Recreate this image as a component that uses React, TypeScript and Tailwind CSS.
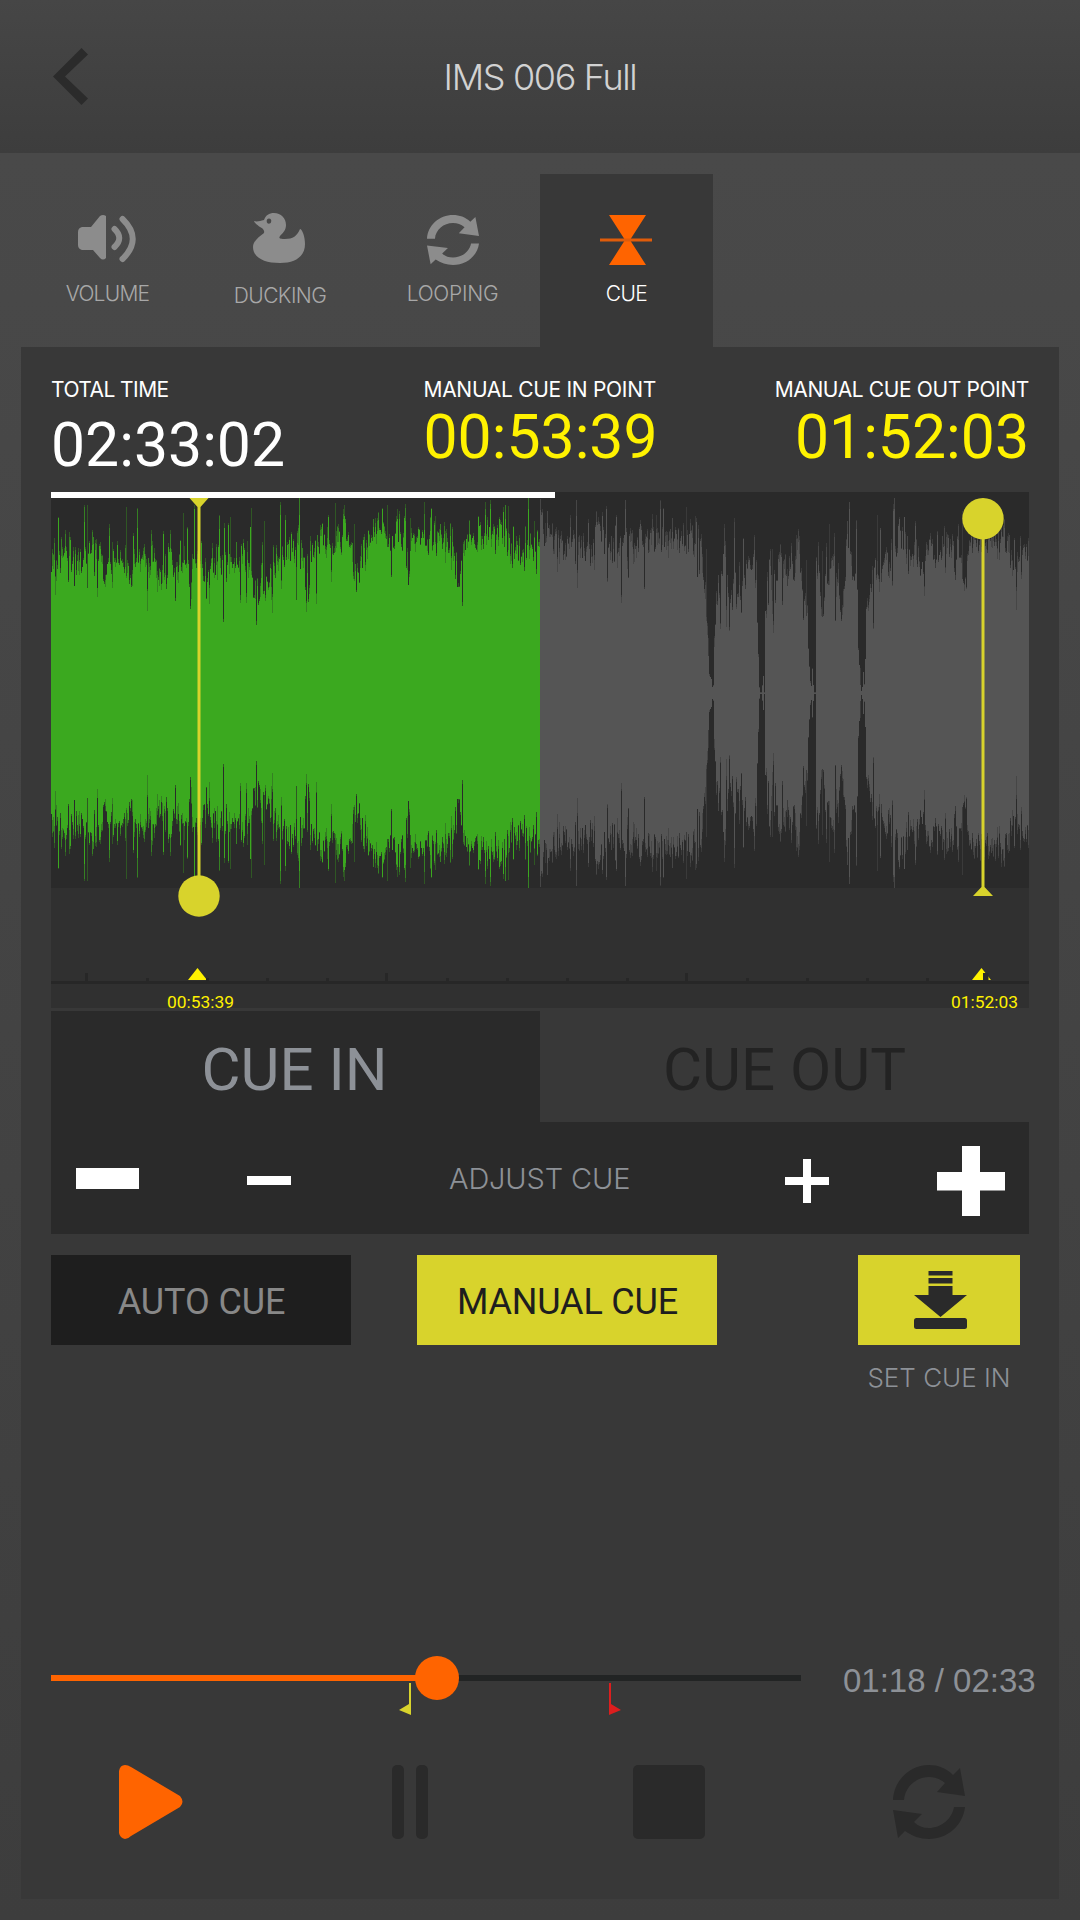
import React from "react";

const LEFT: number[] = [33,265,60,255,80,220,110,255,130,235,160,180,175,210,190,290,215,260,232,200,250,250,270,290,300,230,320,290,335,230,350,290,375,310,385,215,410,240,440,225,465,220,480,250,495,290,510,240,525,280,535,220,550,270,575,260,590,240,605,210,620,240,640,330,670,320,690,280,710,240,730,230,765,190,785,230,800,300,812,200,825,220,845,150,865,210,885,200,910,140,925,160,945,290,960,290,970,190,990,180,1015,150,1030,140,1050,180,1075,140,1090,190,1105,280,1118,170,1130,190,1142,140,1155,210,1170,180,1190,150,1205,190,1225,170,1240,210,1255,310,1268,220,1290,170,1320,165,1350,160,1375,120,1390,180,1410,230,1425,190,1440,230,1470,190,1499,180];
const RIGHT: number[] = [30,190,60,170,80,190,100,200,130,190,165,200,180,160,205,150,225,190,250,210,270,230,290,170,310,220,330,150,350,190,370,170,390,200,420,190,435,160,455,190,480,180,495,200,512,190,518,280,525,375,530,400,535,570,542,590,550,600,553,440,557,370,570,370,577,190,585,230,590,350,605,310,612,250,622,370,632,260,645,330,655,230,672,230,678,330,682,460,688,630,695,638,698,560,702,630,706,330,716,220,726,330,736,290,750,230,762,230,772,280,782,210,792,290,805,210,813,270,820,370,832,410,838,580,842,639,846,550,850,630,856,639,858,240,865,280,875,400,880,370,886,220,895,350,905,220,915,260,925,350,932,420,940,330,950,180,962,250,972,290,980,240,986,540,992,636,1000,560,1003,639,1008,350,1020,400,1035,250,1050,290,1065,250,1080,290,1085,200,1115,150,1135,230,1155,220,1180,280,1195,190,1220,240,1245,220,1260,180,1275,260,1285,180,1300,300,1310,310,1315,200,1340,190,1375,190,1400,220,1420,150,1440,230,1455,290,1480,210,1497,190];

// Envelope samples as [x, half height] pairs across the 978px waveform.
const ENVELOPE: [number, number][] = [];
for (let i = 0; i < LEFT.length; i += 2) ENVELOPE.push([(LEFT[i] - 33) / 3, (640 - LEFT[i + 1]) / 3]);
for (let i = 0; i < RIGHT.length; i += 2) ENVELOPE.push([489 + (RIGHT[i] - 30) / 3, (640 - RIGHT[i + 1]) / 3]);

const rand = (n: number) => {
  const s = Math.sin(n * 127.1 + 11.7) * 43758.5453;
  return s - Math.floor(s);
};

function level(x: number) {
  for (let i = 1; i < ENVELOPE.length; i++) {
    const [x0, y0] = ENVELOPE[i - 1];
    const [x1, y1] = ENVELOPE[i];
    if (x <= x1) return y0 + ((y1 - y0) * (x - x0)) / Math.max(x1 - x0, 0.01);
  }
  return ENVELOPE[ENVELOPE.length - 1][1];
}

function bars(from: number, to: number) {
  let solid = "";
  let mid = "";
  let faint = "";
  const bar = (x: number, h: number) => `M${x} ${195 - h}h1v${2 * h}h-1z`;
  for (let x = from; x < to; x++) {
    const base = level(x);
    const scale = Math.min(1, base / 110);
    const room = Math.max(0, 190 - base) / 50;
    let h = base - 3 + (rand(x) - 0.5) * 26 * scale;
    if (rand(x + 2000) > 0.8) h -= rand(x + 3000) * 42 * scale * Math.min(1, room + 0.25);
    if (rand(x + 4000) > 0.82) h += rand(x + 5000) * 46 * scale * Math.min(1, room);
    h = Math.max(0.5, Math.min(184, Math.round(h)));
    let m = h;
    if (rand(x + 6000) > 0.5) m += rand(x + 6500) * 20 * scale * Math.min(1, room);
    let f = m + rand(x + 7000) * 5 * scale;
    if (rand(x + 8000) > 0.95) f += (192 - f) * rand(x + 9000) * scale;
    solid += bar(x, h);
    mid += bar(x, Math.round(m));
    faint += bar(x, Math.min(193, Math.round(f)));
  }
  return { solid, mid, faint };
}

const played = bars(0, 489);
const rest = bars(489, 978);

function Waveform() {
  return (
    <svg className="block h-[390px] w-[978px]" viewBox="0 0 978 390" shapeRendering="crispEdges">
      <path d={played.faint} fill="#2f5724" />
      <path d={played.mid} fill="#358023" />
      <path d={played.solid} fill="#3ba91f" />
      <path d={rest.faint} fill="#3a3a3a" />
      <path d={rest.mid} fill="#464646" />
      <path d={rest.solid} fill="#555555" />
    </svg>
  );
}

function LoopIcon({ className }: { className: string }) {
  return (
    <svg className={className} viewBox="0 0 72 74" preserveAspectRatio="none" fill="currentColor">
      <path d="M0 35C1 15 17 0 36 0C45 0 53 3 60 10L67 3L72 31L44 27L52 18C47 14 42 12 36 12C23 12 12 22 11 35Z" />
      <path d="M72 42C70 60 55 74 36 74C27 74 19 71 12 66L5 73L0 45L29 49L21 57C25 61 30 63 36 63C48 63 59 54 61 42Z" />
    </svg>
  );
}

function VolumeIcon() {
  return (
    <svg className="mb-[2px] h-[48px] w-[58px]" viewBox="0 0 58 48" fill="none">
      <path d="M4 12H13L22 1Q25-1 28 1V43Q25 46 22 43L15 35H4Q0 34 0 30V17Q0 13 4 12Z" fill="#8c8c8c" />
      <path d="M36.500 14Q46 23 36.500 32M44.500 4Q65 24 44.500 44" stroke="#8c8c8c" strokeWidth="6" strokeLinecap="round" />
    </svg>
  );
}

function DuckIcon() {
  return (
    <svg className="mr-[2px] mb-[4px] h-[50px] w-[52px]" viewBox="0 0 52 50" fill="#8c8c8c">
      <path
        fillRule="evenodd"
        d="M11 7C13 2 16 0 21 0C28 0 33 5 33 12C33 17 30 20 27 23C25 26 28 26 32 26C40 26 44 23 47 16C49 16 52 23 52 31C52 43 43 50 27 50C10 50 0 44 0 34C0 28 6 24 11 20C12 17 9 15 7 14C4 12 1 9 1 8C4 9 7 8 11 7ZM16 5.500A2.300 2.600 0 1 0 16 10.700A2.300 2.600 0 1 0 16 5.500Z"
      />
    </svg>
  );
}

function CueIcon() {
  return (
    <svg className="h-[50px] w-[52px]" viewBox="0 0 52 50" fill="#ff6400">
      <path d="M9 0H46L30 25L46 50H9L25 25Z" />
      <path d="M0 23.500H52V26.500H0Z" fill="#e05c0a" />
    </svg>
  );
}

function Tab({
  label,
  icon,
  labelClass,
  active,
}: {
  label: string;
  icon: React.ReactNode;
  labelClass: string;
  active?: boolean;
}) {
  return (
    <button className={`flex h-[173px] w-[173px] flex-col items-center ${active ? "bg-[#383838] text-white" : "text-[#a8a8a8]"}`}>
      <span className="mt-[39px] mr-[1px] flex h-[54px] items-center">{icon}</span>
      <span className={`font-['Inter'] text-[21px] leading-[24px] font-light ${labelClass}`}>{label}</span>
    </button>
  );
}

function Ruler() {
  const ticks = Array.from({ length: 16 }, (_, i) => i);
  return (
    <svg className="block h-[120px] w-[978px]" viewBox="0 0 978 120">
      <path d="M137 92L146.500 80L156 92Z" fill="#fff200" />
      <path d="M921 92L930.500 80L940 92Z" fill="#fff200" />
      <path d="M0 93H978V96H0Z" fill="#272727" />
      {ticks.map((i) => (
        <rect key={i} x={(i % 5 === 0 ? 34 : 35) + i * 60} y={i % 5 === 0 ? 85 : 90} width="3" height={i % 5 === 0 ? 8 : 3} fill="#272727" />
      ))}
      <rect x="932" y="85" width="5.500" height="8" fill="#2a2a2a" />
    </svg>
  );
}

function TimeReadout({
  label,
  value,
  className,
  labelClass,
  valueClass,
}: {
  label: string;
  value: string;
  className?: string;
  labelClass: string;
  valueClass: string;
}) {
  return (
    <div className={className}>
      <div className={`font-['Inter'] text-[21px] leading-[24px] whitespace-nowrap ${labelClass}`}>{label}</div>
      <div className={`text-[60.7px] leading-[60px] whitespace-nowrap ${valueClass}`}>{value}</div>
    </div>
  );
}

export default function App() {
  return (
    <main className="flex h-[1920px] w-[1080px] flex-col bg-[#3d3d3d] font-['Roboto',sans-serif]">
      <header className="grid h-[153px] shrink-0 grid-cols-[180px_1fr_180px] items-center bg-linear-to-b from-[#464646] to-[#3d3d3d]">
        <button className="pl-[53px]">
          <svg className="h-[57px] w-[35px]" viewBox="0 0 35 57">
            <path d="M28.500 0L35 6.500L12 28.500L35 50.500L28.500 57L0 28.500Z" fill="#2b2b2b" />
          </svg>
        </button>
        <h1 className="text-center font-['Inter'] text-[36px] font-light tracking-[-1.35px] text-[#d2d2d2]">IMS 006 Full</h1>
      </header>

      <div className="flex grow flex-col bg-linear-to-b from-[#494949] to-[#3d3d3d] px-[21px]">
        <nav className="flex h-[194px] items-end">
          <Tab label="VOLUME" icon={<VolumeIcon />} labelClass="mt-[15px] tracking-[-0.75px]" />
          <Tab label="DUCKING" icon={<DuckIcon />} labelClass="mt-[17px] mr-[1px] tracking-[-0.55px]" />
          <Tab label="LOOPING" icon={<LoopIcon className="h-[50px] w-[52px] text-[#8c8c8c]" />} labelClass="mt-[15px] mr-[2px] tracking-[-0.25px]" />
          <Tab label="CUE" icon={<CueIcon />} labelClass="mt-[15px] tracking-[-0.5px]" active />
        </nav>

        <section className="flex h-[1552px] flex-col bg-[#383838] px-[30px] pt-[31px]">
          <div className="flex h-[114px] text-white">
            <TimeReadout label="TOTAL TIME" value="02:33:02" className="w-[372.500px]" labelClass="tracking-[-0.55px]" valueClass="mt-[14px]" />
            <TimeReadout label="MANUAL CUE IN POINT" value="00:53:39" className="w-[240px]" labelClass="tracking-[-0.3px]" valueClass="mt-[6px] text-[#fff200]" />
            <TimeReadout label="MANUAL CUE OUT POINT" value="01:52:03" className="grow text-right" labelClass="tracking-[-0.38px]" valueClass="mt-[6px] text-[#fff200]" />
          </div>

          <div className="relative w-[978px]">
            <div className="h-[396px] bg-[#2a2a2a]">
              <div className="h-[6px] w-[504px] bg-white" />
              <Waveform />
            </div>
            <div className="relative h-[120px] bg-[#303030]">
              <Ruler />
              <span className="absolute top-[104px] left-[116px] text-[17.4px] leading-[20px] text-[#fff200]">00:53:39</span>
              <span className="absolute top-[104px] left-[900px] text-[17.4px] leading-[20px] text-[#fff200]">01:52:03</span>
            </div>
            <svg className="absolute top-[6px] left-[127px] h-[420px] w-[42px]" viewBox="0 0 42 420" fill="#d8d32c">
              <path d="M11.500 0H30.500L22.500 9V378H19.500V9Z" />
              <circle cx="21" cy="398" r="20.700" />
            </svg>
            <svg className="absolute top-[6px] left-[911px] h-[398px] w-[42px]" viewBox="0 0 42 398" fill="#d8d32c">
              <path d="M19.500 40H22.500V389L31 398H11L19.500 389Z" />
              <circle cx="21" cy="20.700" r="20.700" />
            </svg>
          </div>

          <div className="mt-[3px] flex h-[111px] w-[978px] text-[60px] leading-[114px]">
            <button className="w-[489px] bg-[#2a2a2a] pt-[2px] pr-[2px] text-[#8d9197]">CUE IN</button>
            <button className="w-[489px] pt-[2px] text-[#232323]">CUE OUT</button>
          </div>
          <div className="flex h-[112px] w-[978px] shrink-0 items-center bg-[#2a2a2a] text-white">
            <span className="ml-[25px] h-[21px] w-[63px] bg-white" />
            <span className="mt-[4px] ml-[108px] h-[9px] w-[44px] bg-white" />
            <span className="mt-[2px] ml-[158px] w-[182px] font-['Inter'] text-[29px] font-light tracking-[-0.15px] whitespace-nowrap text-[#8d9197]">ADJUST CUE</span>
            <svg className="mt-[5px] ml-[154px] h-[44px] w-[44px]" viewBox="0 0 44 44" fill="white">
              <path d="M18 0H26V18H44V26H26V44H18V26H0V18H18Z" />
            </svg>
            <svg className="mt-[6px] ml-[108px] h-[70px] w-[68px]" viewBox="0 0 68 70" fill="white">
              <path d="M25 0H43V26H68V44.500H43V70H25V44.500H0V26H25Z" />
            </svg>
          </div>

          <div className="mt-[21px] flex h-[90px] text-[36px]">
            <button className="w-[300px] bg-[#1e1e1e] pt-[4px] pl-[1px] tracking-[-0.1px] text-[#888888]">AUTO CUE</button>
            <button className="ml-[66px] w-[300px] bg-[#d8d32c] pt-[4px] pl-[1px] tracking-[-0.2px] text-[#1e1e1e]">MANUAL CUE</button>
            <div className="ml-[141px] flex w-[162px] flex-col">
              <button className="flex h-[90px] shrink-0 justify-center bg-[#d8d32c] pt-[16px] pl-[2px]">
                <svg className="h-[58px] w-[53px]" viewBox="0 0 53 58" fill="#2a2a2a">
                  <path d="M14.500 0H38.500V4.500H14.500ZM14.500 7H38.500V12.500H14.500ZM14.500 15H38.500V24H53L26.500 46L0 24H14.500Z" />
                  <rect y="47" width="53" height="11" rx="2.500" />
                </svg>
              </button>
              <span className="mt-[17px] text-center font-['Inter'] text-[26px] leading-[32px] font-light whitespace-nowrap text-[#8d9197]">SET CUE IN</span>
            </div>
          </div>

          <div className="mt-auto flex h-[60px] items-start">
            <div className="relative h-[60px] w-[750px] shrink-0 pt-[19px]">
              <div className="h-[6px] bg-[#222424]">
                <div className="h-[6px] w-[386px] bg-[#ff6400]" />
              </div>
              <span className="absolute top-0 left-[364px] h-[44px] w-[44px] rounded-full bg-[#ff6400]" />
              <svg className="absolute top-[27px] left-[348px] h-[32px] w-[12px]" viewBox="0 0 12 32" fill="#d8d32c">
                <path d="M10 0H12V32L0 27L10 21Z" />
              </svg>
              <svg className="absolute top-[27px] left-[558px] h-[32px] w-[12px]" viewBox="0 0 12 32" fill="#dc1e1e">
                <path d="M2 0H0V32L12 27L2 21Z" />
              </svg>
            </div>
            <span className="mt-[5px] ml-[42px] font-['Liberation_Sans'] text-[33px] leading-[40px] whitespace-nowrap text-[#8d9197]">01:18 / 02:33</span>
          </div>

          <div className="mt-[49px] mb-[60px] flex h-[74px] text-[#2a2a2a]">
            <svg className="ml-[68px] h-[74px] w-[64px]" viewBox="0 0 64 74" fill="#ff6400">
              <path d="M0 6Q1 0 6 0Q9 0 12 2L61 31Q66 37 61 42L12 71Q9 74 6 74Q1 73 0 68Z" />
            </svg>
            <span className="ml-[209px] w-[12px] rounded-[5px] bg-current" />
            <span className="ml-[12px] w-[12px] rounded-[5px] bg-current" />
            <span className="ml-[205px] w-[72px] rounded-[5px] bg-current" />
            <LoopIcon className="ml-[188px] h-[74px] w-[72px]" />
          </div>
        </section>
      </div>
    </main>
  );
}
